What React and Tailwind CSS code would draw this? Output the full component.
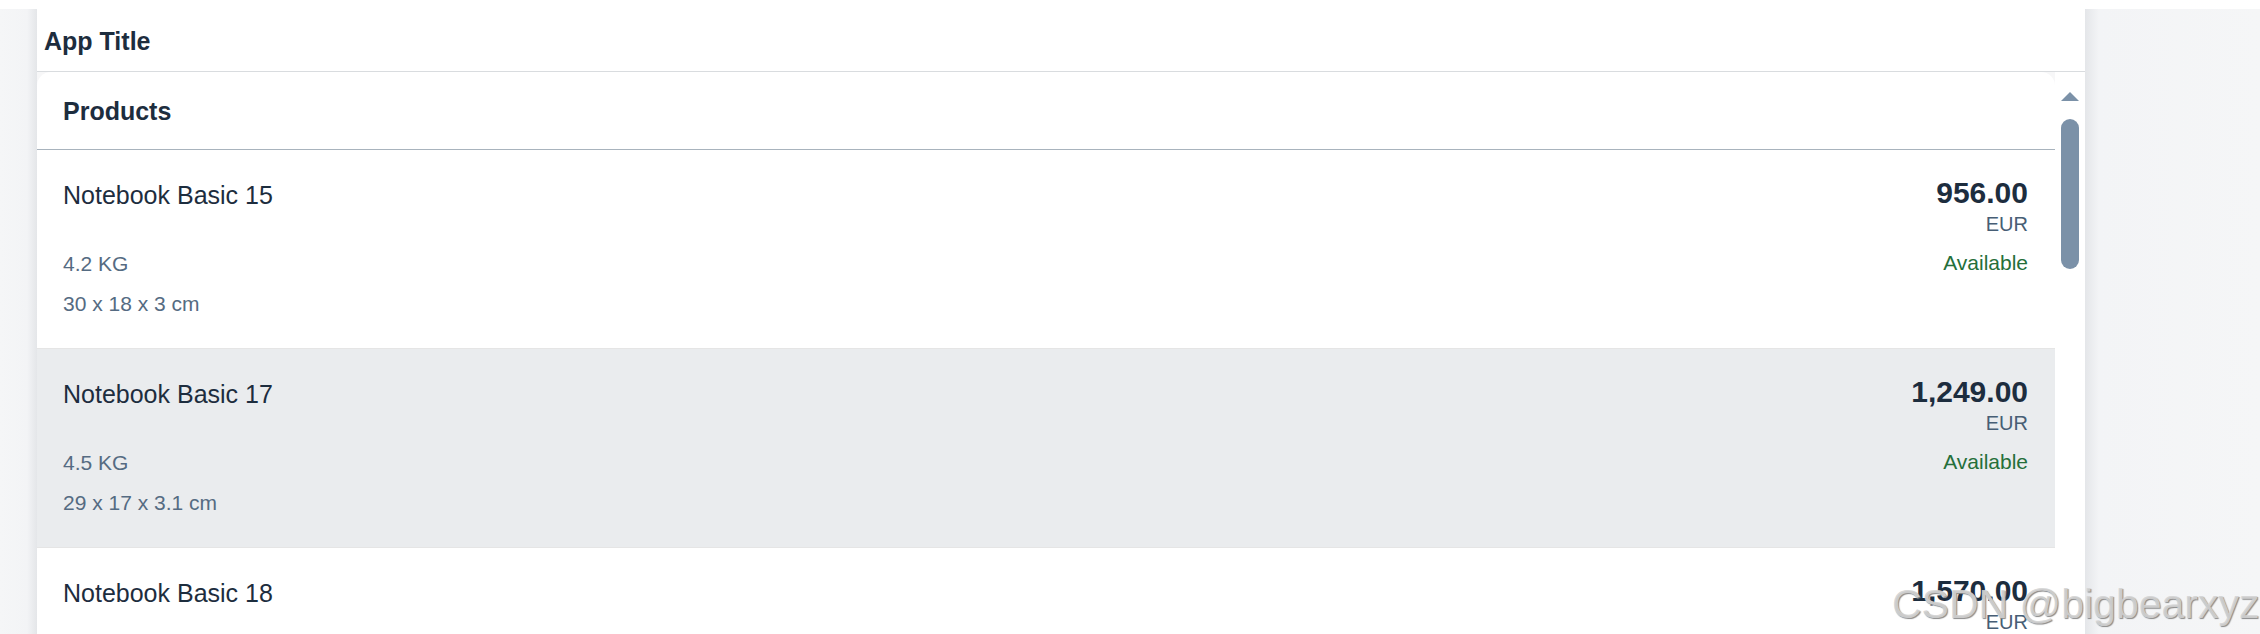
import React from "react";

const products = [
    { name: "Notebook Basic 15", price: "956.00", weight: "4.2 KG", dims: "30 x 18 x 3 cm" },
    { name: "Notebook Basic 17", price: "1,249.00", weight: "4.5 KG", dims: "29 x 17 x 3.1 cm", hover: true },
    { name: "Notebook Basic 18", price: "1,570.00", weight: "4.2 KG", dims: "28 x 19 x 2.5 cm" },
];

function ProductRow({ item }) {
    return (
        <div
            className={
                "h-[199px] shrink-0 flex justify-between pl-[26px] pr-[27px] border-b border-[#e5e5e5] " +
                (item.hover ? "bg-[#eaecee]" : "bg-white")
            }
        >
            <div className="flex flex-col">
                <div className="pt-[33px] text-[25px] leading-[25px] text-[#1d2d3e]">{item.name}</div>
                <div className="mt-[45px] text-[21px] leading-[21px] text-[#556b82]">{item.weight}</div>
                <div className="mt-[19px] text-[21px] leading-[21px] text-[#556b82]">{item.dims}</div>
            </div>
            <div className="flex flex-col items-end">
                <div className="pt-[28px] text-[30px] leading-[30px] font-bold text-[#1d2d3e]">{item.price}</div>
                <div className="mt-[6px] text-[20px] leading-[20px] text-[#475e75]">EUR</div>
                <div className="mt-[18px] text-[21px] leading-[21px] text-[#256f3a]">Available</div>
            </div>
        </div>
    );
}

export default function App() {
    return (
        <div className="relative w-full h-[634px] overflow-hidden bg-white flex font-['Liberation_Sans',Arial,sans-serif]">
            {/* left shell margin */}
            <div className="w-[37px] shrink-0 mt-[9px] bg-[linear-gradient(to_left,#e4e6e9,#f3f4f6_10px,#f5f6f7)]" />

            <div className="w-[2048px] shrink-0 flex flex-col">
                <div className="h-[72px] shrink-0 border-b border-[#d9dcdf] px-[7px] pt-[29px]">
                    <h1 className="text-[25px] leading-[25px] font-bold text-[#1d2d3e]">App Title</h1>
                </div>

                <div className="flex flex-1 min-h-0">
                    <div className="flex-1 bg-[#f7f7f8]">
                        <div className="h-full bg-white rounded-t-[14px] flex flex-col overflow-hidden">
                            <div className="h-[78px] shrink-0 border-b border-[#a8b3bd] pl-[26px] pt-[27px]">
                                <h2 className="text-[25px] leading-[25px] font-bold text-[#1d2d3e]">Products</h2>
                            </div>
                            {products.map((p, i) => (
                                <ProductRow key={i} item={p} />
                            ))}
                        </div>
                    </div>

                    {/* scrollbar */}
                    <div className="w-[30px] shrink-0 bg-white pl-[6px] pt-[20px]">
                        <svg width="18" height="9" viewBox="0 0 18 9" className="block">
                            <polygon points="9,0 18,9 0,9" fill="#7b91a8" />
                        </svg>
                        <div className="mt-[18px] w-[18px] h-[150px] rounded-full bg-[#7b91a8]" />
                    </div>
                </div>
            </div>

            {/* right shell margin */}
            <div className="flex-1 mt-[9px] bg-[linear-gradient(to_right,#e4e6e9,#f3f4f6_14px,#f5f6f7)]" />

            {/* watermark */}
            <div className="absolute left-[1892px] top-[580px] text-[41px] leading-[48px] text-[#d4d4d4]/90 [text-shadow:1px_1px_1px_#8a8a8a] pointer-events-none whitespace-nowrap">
                CSDN @bigbearxyz
            </div>
        </div>
    );
}
